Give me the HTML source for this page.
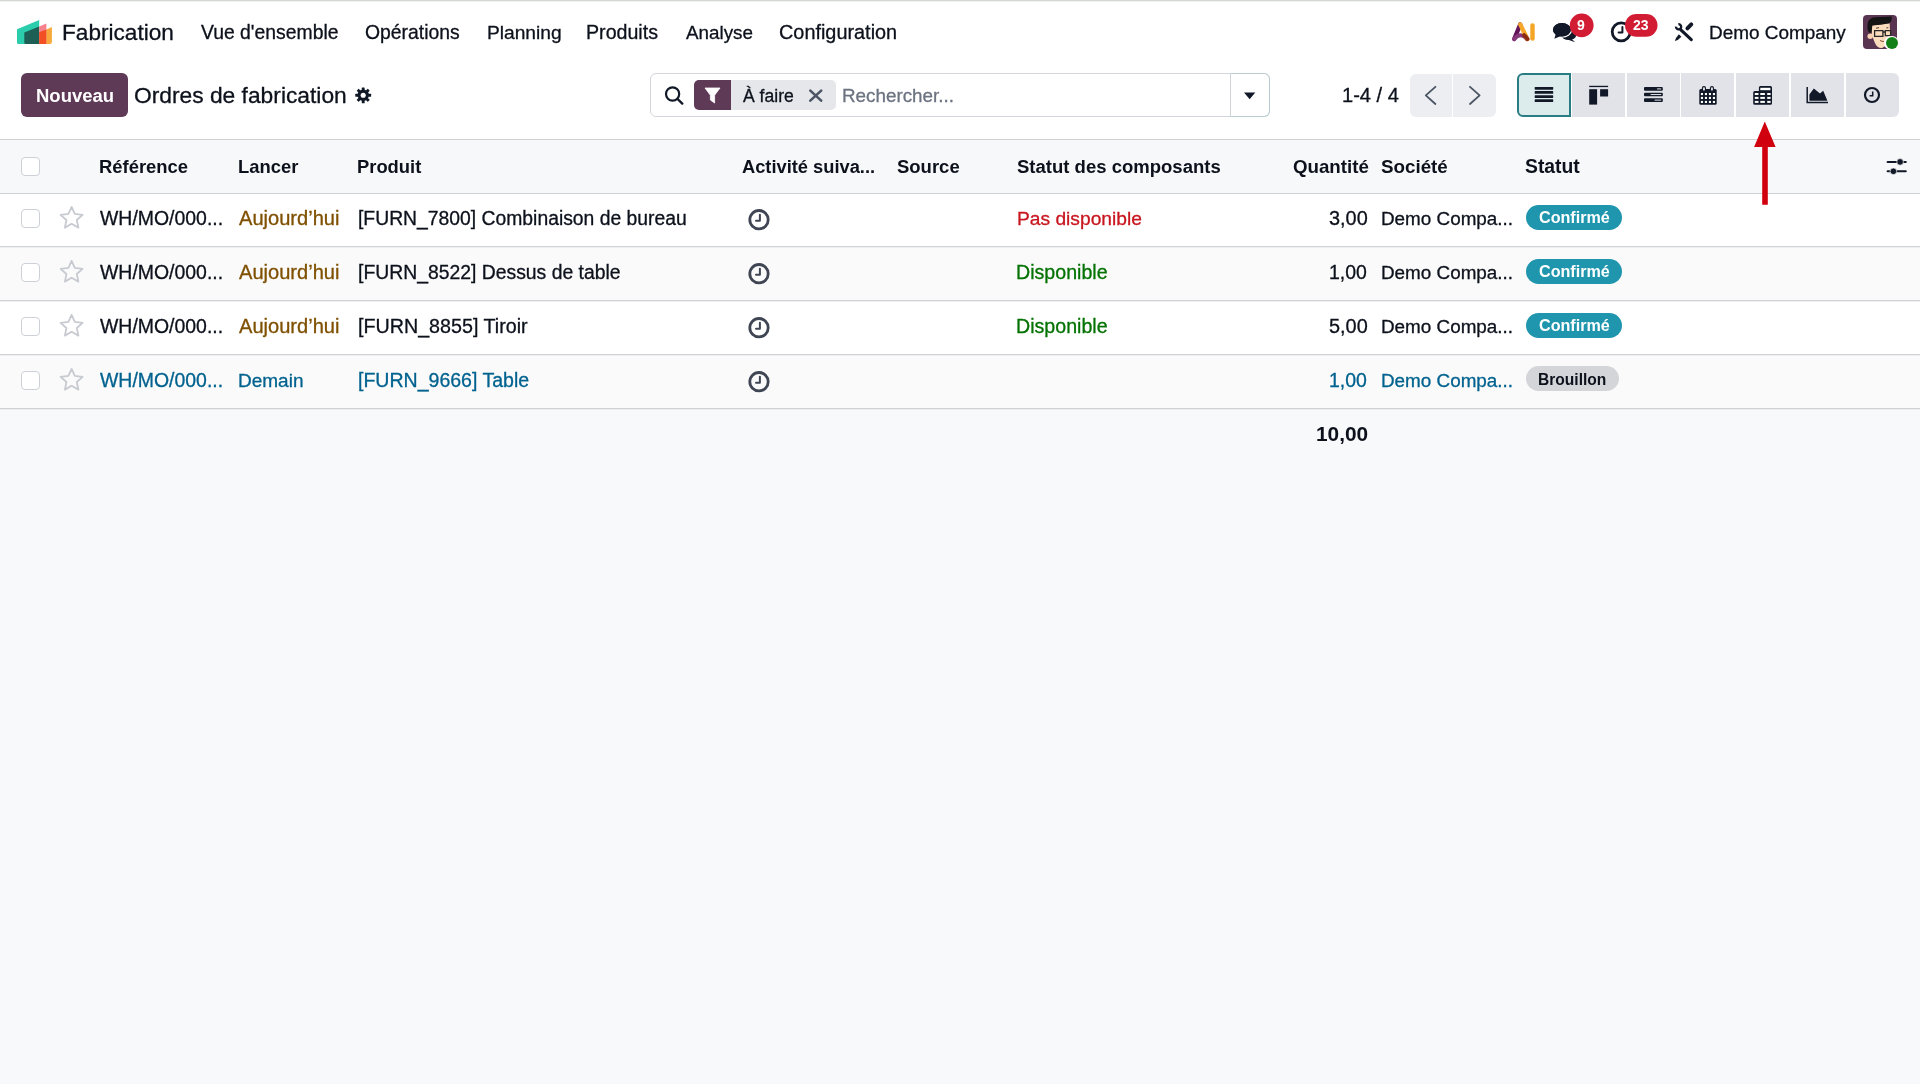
<!DOCTYPE html>
<html><head><meta charset="utf-8"><title>Ordres de fabrication</title>
<style>
html,body{margin:0;padding:0}
body{width:1920px;height:1084px;overflow:hidden;position:relative;background:#f8f9fa;font-family:"Liberation Sans",sans-serif}
.a{position:absolute;box-sizing:border-box}
.t{position:absolute;white-space:nowrap;font-family:"Liberation Sans",sans-serif;will-change:transform}
svg{position:absolute;overflow:visible}
</style></head><body>
<!-- white top area -->
<div class=a style="left:0;top:0;width:1920px;height:139px;background:#ffffff"></div>
<div class=a style="left:0;top:0;width:1920px;height:1px;background:#d3d8d5"></div>
<div class=a style="left:0;top:1px;width:1920px;height:1px;background:#f1f3f1"></div>

<!-- app logo -->
<svg style="left:0;top:0" width="60" height="60" viewBox="0 0 60 60">
<path d="M17 29.3 L39.2 20 L39.2 44 L18.5 44 Q17 44 17 42.5 Z" fill="#2bcdad"/>
<path d="M24.3 32.4 L39.2 26.5 L39.2 44 L25.8 44 Q24.3 44 24.3 42.5 Z" fill="#1d5f54"/>
<path d="M39.2 26.6 L46.4 23.6 L46.4 44 L39.2 44 Z" fill="#f7828e"/>
<path d="M46.4 29.4 L51.9 27 L51.9 42 Q51.9 44 49.9 44 L46.4 44 Z" fill="#f7a93b"/>
<path d="M39.2 32.3 L46.4 29.4 L46.4 44 L39.2 44 Z" fill="#f24f24"/>
</svg>

<!-- AI icon -->
<svg style="left:0;top:0" width="1" height="1">
<path d="M1520.2 24.6 L1514.2 39" stroke="#64155a" stroke-width="4.4" stroke-linecap="round" fill="none"/>
<path d="M1514.2 39 Q1520.5 31.5 1527.2 39" stroke="#86397a" stroke-width="4.2" stroke-linecap="round" fill="none"/>
<path d="M1520.4 24.6 L1527.3 39" stroke="#f6a82b" stroke-width="4.4" stroke-linecap="round" fill="none"/>
<path d="M1524.2 35.2 Q1526.2 36.8 1527.3 39" stroke="#8c2c12" stroke-width="4" stroke-linecap="round" fill="none"/>
<path d="M1532.5 25.4 L1532.5 38.6" stroke="#f5a525" stroke-width="4.4" stroke-linecap="round" fill="none"/>
</svg>

<!-- chat icon -->
<svg style="left:0;top:0" width="1" height="1">
<ellipse cx="1568.8" cy="34.6" rx="7.6" ry="5.4" fill="#111827"/>
<path d="M1571 38.5 L1575.2 42.3 L1567.5 39.6 Z" fill="#111827"/>
<ellipse cx="1561.9" cy="29.8" rx="9.6" ry="7.4" fill="#111827" stroke="#ffffff" stroke-width="1.3"/>
<ellipse cx="1561.9" cy="29.8" rx="9" ry="6.8" fill="#111827"/>
<path d="M1555.8 34.2 L1554.3 38.7 L1561 36" fill="#111827"/>
<circle cx="1581.7" cy="25.35" r="11.9" fill="#d21c34"/>
</svg>
<!-- clock icon nav -->
<svg style="left:0;top:0" width="1" height="1">
<circle cx="1621.2" cy="31.8" r="9" stroke="#111827" stroke-width="2.8" fill="none"/>
<path d="M1622.4 27 L1622.4 32.6 L1618.6 32.6" stroke="#111827" stroke-width="2" fill="none" stroke-linecap="round" stroke-linejoin="round"/>
<rect x="1625" y="14" width="32.5" height="22.7" rx="11.35" fill="#d21c34"/>
</svg>
<!-- tools icon -->
<svg style="left:0;top:0" width="1" height="1">
<path d="M1680.6 29.6 L1691.3 39.6" stroke="#111827" stroke-width="3.1" stroke-linecap="round"/>
<path d="M1678.37 24.2 A2.6 2.6 0 1 1 1676.0 26.57" stroke="#111827" stroke-width="2.3" fill="none"/>
<path d="M1691.3 24.3 L1687.4 28.4" stroke="#111827" stroke-width="3.9" stroke-linecap="round"/>
<path d="M1678.9 34.3 L1681.4 36.7 L1677.8 40 L1674.8 40.9 L1676 38 Z" fill="#111827"/>
</svg>
<!-- avatar -->
<div class=a style="left:1863px;top:14.8px;width:34px;height:34px;border-radius:4px;background:#5a3552;overflow:hidden">
<svg style="left:0;top:0" width="34" height="34" viewBox="0 0 34 34">
<circle cx="7.2" cy="21.2" r="2.7" fill="#f8d2b0"/>
<path d="M8.5 10.4 L26.6 8.2 L27.4 21 Q26 30 19 33 Q14 33.5 11.5 27 Q9.2 22 8.5 17 Z" fill="#fbdcbc"/>
<path d="M4.5 9.3 Q5 5.5 6.7 4.5 Q9 2.3 11.9 2.3 L28.8 1.5 L28.5 5.6 Q27.6 7.5 26.2 8.2 L19.2 9.6 L9.3 10.4 L8.6 17.8 L6.3 17.8 Q4.5 15 4.5 13.7 Z" fill="#151515"/>
<path d="M11.6 15.7 H19.9 V21.3 H11.6 Z M22.3 15.7 H27.6 V20.7 H22.3 Z M19.9 17 H22.3" stroke="#262626" stroke-width="1.3" fill="none"/>
<path d="M13 13.3 L16 12.6 M23.4 12.8 L25.3 12.8" stroke="#3a2a20" stroke-width="0.9"/>
<path d="M17 25.4 Q19 26.8 21 26.4" stroke="#7a3d2a" stroke-width="0.9" fill="none"/>
</svg>
</div>
<div class=a style="left:1884.25px;top:35.5px;width:14.6px;height:14.6px;border-radius:50%;background:#fff"></div>
<div class=a style="left:1885.55px;top:36.8px;width:12px;height:12px;border-radius:50%;background:#137f17"></div>
<div class=t style="left:1576.6px;top:18px;font-size:14px;line-height:14px;font-weight:700;color:#fff">9</div>
<div class=t style="left:1632.6px;top:18px;font-size:14px;line-height:14px;font-weight:700;color:#fff">23</div>

<!-- Nouveau button -->
<div class=a style="left:21px;top:73px;width:107px;height:44px;border-radius:6px;background:#5f3a57"></div>
<!-- gear -->
<svg style="left:0;top:0" width="1" height="1">
<g transform="translate(363.2 95.3)" fill="#111827">
<circle r="5.7"/><rect x="-1.45" y="-7.9" width="2.9" height="4" rx="0.5" transform="rotate(0)"/><rect x="-1.45" y="-7.9" width="2.9" height="4" rx="0.5" transform="rotate(45)"/><rect x="-1.45" y="-7.9" width="2.9" height="4" rx="0.5" transform="rotate(90)"/><rect x="-1.45" y="-7.9" width="2.9" height="4" rx="0.5" transform="rotate(135)"/><rect x="-1.45" y="-7.9" width="2.9" height="4" rx="0.5" transform="rotate(180)"/><rect x="-1.45" y="-7.9" width="2.9" height="4" rx="0.5" transform="rotate(225)"/><rect x="-1.45" y="-7.9" width="2.9" height="4" rx="0.5" transform="rotate(270)"/><rect x="-1.45" y="-7.9" width="2.9" height="4" rx="0.5" transform="rotate(315)"/>
<circle r="2.55" fill="#fff"/>
</g>
</svg>
<!-- search box -->
<div class=a style="left:650px;top:73.3px;width:620px;height:43.7px;border:1.4px solid #d3d6da;border-radius:6px;background:#fff"></div>
<div class=a style="left:1230px;top:73.3px;width:40px;height:43.7px;border:1.4px solid #b9ccd0;border-left:1.4px solid #d0d3d8;border-radius:0 6px 6px 0;background:#fff"></div>
<svg style="left:0;top:0" width="1" height="1">
<circle cx="672.6" cy="94" r="6.6" stroke="#111827" stroke-width="2.2" fill="none"/>
<path d="M677.6 99 L682.3 103.6" stroke="#111827" stroke-width="2.4" stroke-linecap="round"/>
</svg>
<div class=a style="left:694px;top:80px;width:142px;height:30px;border-radius:5px;background:#e5e7eb"></div>
<div class=a style="left:694px;top:80px;width:37px;height:30px;border-radius:5px 0 0 5px;background:#5f3a57"></div>
<svg style="left:0;top:0" width="1" height="1">
<path d="M705 88 L720 88 L714.6 95.2 L714.6 103 L710.4 100 L710.4 95.2 Z" fill="#fff" stroke="#fff" stroke-width="0.8" stroke-linejoin="round"/>
<path d="M810.3 90.6 L821.2 100.6 M821.2 90.6 L810.3 100.6" stroke="#4b5563" stroke-width="2.6" stroke-linecap="round"/>
<path d="M1244 92.5 L1255.3 92.5 L1249.65 99.2 Z" fill="#111827"/>
</svg>

<!-- pager -->
<div class=a style="left:1409.5px;top:73.5px;width:86.5px;height:43.5px;border-radius:6px;background:#eceef2"></div>
<div class=a style="left:1451.8px;top:73.5px;width:1.6px;height:43.5px;background:#ffffff"></div>
<svg style="left:0;top:0" width="1" height="1">
<path d="M1435.4 86.8 L1425.8 95.4 L1435.4 104" stroke="#4b5563" stroke-width="1.8" fill="none" stroke-linecap="round" stroke-linejoin="round"/>
<path d="M1470 86.8 L1479.6 95.4 L1470 104" stroke="#4b5563" stroke-width="1.8" fill="none" stroke-linecap="round" stroke-linejoin="round"/>
</svg>

<!-- view switcher -->
<div class=a style="left:1517.3px;top:73.2px;width:53.3px;height:43.8px;border:2px solid #287c82;border-radius:6px 0 0 6px;background:#dcecec"></div>
<div class=a style="left:1572.3px;top:73.2px;width:52.8px;height:43.8px;background:#e1e3e8"></div>
<div class=a style="left:1626.9px;top:73.2px;width:52.9px;height:43.8px;background:#e1e3e8"></div>
<div class=a style="left:1681.4px;top:73.2px;width:53.1px;height:43.8px;background:#e1e3e8"></div>
<div class=a style="left:1736.1px;top:73.2px;width:52.7px;height:43.8px;background:#e1e3e8"></div>
<div class=a style="left:1791px;top:73.2px;width:52.8px;height:43.8px;background:#e1e3e8"></div>
<div class=a style="left:1845.5px;top:73.2px;width:53px;height:43.8px;border-radius:0 6px 6px 0;background:#e1e3e8"></div>
<svg style="left:0;top:0" width="1" height="1">
<!-- list -->
<g fill="#111827">
<rect x="1534.7" y="87" width="18.5" height="2.7" rx="0.6"/>
<rect x="1534.7" y="91.1" width="18.5" height="2.7" rx="0.6"/>
<rect x="1534.7" y="95.2" width="18.5" height="2.7" rx="0.6"/>
<rect x="1534.7" y="99.3" width="18.5" height="2.7" rx="0.6"/>
<!-- kanban -->
<rect x="1589.2" y="85.8" width="18.9" height="1.3"/>
<rect x="1589.2" y="89.2" width="7.9" height="15.4"/>
<rect x="1600.1" y="89.2" width="8" height="7.3"/>
<!-- activity -->
<rect x="1644" y="87.1" width="18.8" height="3.6" rx="1"/>
<rect x="1644" y="92.8" width="18.8" height="3.5" rx="1"/>
<rect x="1644" y="98.3" width="18.8" height="3.7" rx="1"/>
</g>
<g stroke="#e1e3e8" stroke-width="1" stroke-linecap="round">
<path d="M1657.4 88.9 H1660.8 M1651 94.55 H1660.8 M1655 100.15 H1660.8"/>
</g>
<!-- calendar -->
<g fill="#111827">
<rect x="1699.3" y="88.9" width="17.4" height="15.85" rx="1.5"/>
<rect x="1701.9" y="86" width="4.1" height="5" rx="2"/>
<rect x="1709.9" y="86" width="4.1" height="5" rx="2"/>
</g>
<g fill="#e1e3e8">
<rect x="1703" y="87.3" width="1.9" height="3.3" rx="0.9"/>
<rect x="1711" y="87.3" width="1.9" height="3.3" rx="0.9"/>
</g>
<g fill="#ffffff">
<rect x="1700.9" y="93" width="2.1" height="2.1"/><rect x="1704.9" y="93" width="2.1" height="2.1"/><rect x="1708.9" y="93" width="2.1" height="2.1"/><rect x="1712.9" y="93" width="2.1" height="2.1"/>
<rect x="1700.9" y="96.9" width="2.1" height="2.1"/><rect x="1704.9" y="96.9" width="2.1" height="2.1"/><rect x="1708.9" y="96.9" width="2.1" height="2.1"/><rect x="1712.9" y="96.9" width="2.1" height="2.1"/>
<rect x="1700.9" y="100.9" width="2.1" height="2.1"/><rect x="1704.9" y="100.9" width="2.1" height="2.1"/><rect x="1708.9" y="100.9" width="2.1" height="2.1"/><rect x="1712.9" y="100.9" width="2.1" height="2.1"/>
</g>
<!-- pivot -->
<path d="M1758.9 87.5 Q1758.9 86 1760.4 86 L1770.5 86 Q1772 86 1772 87.5 L1772 103.25 Q1772 104.75 1770.5 104.75 L1754.7 104.75 Q1753.2 104.75 1753.2 103.25 L1753.2 92.5 Q1753.2 91 1754.7 91 L1758.9 91 Z" fill="#111827"/>
<g fill="#ffffff">
<rect x="1760.3" y="87.8" width="10.1" height="2.4"/>
<rect x="1754.8" y="93" width="3.7" height="2"/><rect x="1760.3" y="93" width="4.6" height="2"/><rect x="1767.2" y="93" width="3.4" height="2"/>
<rect x="1754.8" y="96.9" width="3.7" height="2"/><rect x="1760.3" y="96.9" width="4.6" height="2"/><rect x="1767.2" y="96.9" width="3.4" height="2"/>
<rect x="1754.8" y="100.9" width="3.7" height="2"/><rect x="1760.3" y="100.9" width="4.6" height="2"/><rect x="1767.2" y="100.9" width="3.4" height="2"/>
</g>
<!-- graph -->
<path d="M1807.2 86.9 V102.6 H1828" stroke="#111827" stroke-width="1.5" fill="none"/>
<path d="M1809.4 100.8 L1809.4 94.5 L1813.8 88.6 L1820 93.5 L1823.2 90.8 L1827.4 100.8 Z" fill="#111827"/>
<!-- clock -->
<circle cx="1872" cy="95" r="7" stroke="#111827" stroke-width="2.2" fill="none"/>
<path d="M1872.7 91.5 V95.7 H1869.6" stroke="#111827" stroke-width="1.5" fill="none"/>
</svg>



<!-- table header -->
<div class=a style="left:0;top:139px;width:1920px;height:1px;background:#cfd1d5"></div>
<div class=a style="left:0;top:140px;width:1920px;height:53px;background:#f7f8fa"></div>
<div class=a style="left:0;top:193px;width:1920px;height:1px;background:#cfd1d5"></div>
<!-- rows -->
<div class=a style="left:0;top:194px;width:1920px;height:52px;background:#ffffff"></div>
<div class=a style="left:0;top:246px;width:1920px;height:1px;background:#cfd1d5"></div>
<div class=a style="left:0;top:247px;width:1920px;height:53px;background:#fafafa"></div>
<div class=a style="left:0;top:300px;width:1920px;height:1px;background:#cfd1d5"></div>
<div class=a style="left:0;top:301px;width:1920px;height:53px;background:#ffffff"></div>
<div class=a style="left:0;top:354px;width:1920px;height:1px;background:#cfd1d5"></div>
<div class=a style="left:0;top:355px;width:1920px;height:53px;background:#fafafa"></div>
<div class=a style="left:0;top:408px;width:1920px;height:1px;background:#cfd1d5"></div>
<div class=a style="left:0;top:247px;width:1920px;height:1px;background:#eeeff1"></div>
<div class=a style="left:0;top:301px;width:1920px;height:1px;background:#f0f1f2"></div>
<div class=a style="left:0;top:355px;width:1920px;height:1px;background:#eeeff1"></div>
<div class=a style="left:0;top:409px;width:1920px;height:1px;background:#eceef0"></div>
<!-- checkboxes -->
<div class=a style="left:21.4px;top:157px;width:18.6px;height:18.6px;border:1.7px solid #cdd0d6;border-radius:4px;background:#ffffff"></div>
<div class=a style="left:21.4px;top:209.2px;width:18.6px;height:18.6px;border:1.7px solid #cdd0d6;border-radius:4px;background:#ffffff"></div>
<div class=a style="left:21.4px;top:263.2px;width:18.6px;height:18.6px;border:1.7px solid #cdd0d6;border-radius:4px;background:#ffffff"></div>
<div class=a style="left:21.4px;top:317.2px;width:18.6px;height:18.6px;border:1.7px solid #cdd0d6;border-radius:4px;background:#ffffff"></div>
<div class=a style="left:21.4px;top:371.2px;width:18.6px;height:18.6px;border:1.7px solid #cdd0d6;border-radius:4px;background:#ffffff"></div>

<!-- stars & activity clocks -->
<svg style="left:0;top:0" width="1" height="1">
<defs>
<path id="star" d="M71.6 206.9 L74.8 213.9 L82.6 214.8 L76.8 220 L78.4 227.6 L71.6 223.8 L64.9 227.6 L66.4 220 L60.6 214.8 L68.4 213.9 Z" fill="none" stroke="#c7cbd1" stroke-width="1.8" stroke-linejoin="round"/>
<g id="aclk">
<circle cx="759" cy="219.7" r="9.2" stroke="#3f4553" stroke-width="2.8" fill="none"/>
<path d="M759.9 214.8 V220.8 H756" stroke="#3f4553" stroke-width="2" fill="none" stroke-linecap="round" stroke-linejoin="round"/>
</g>
</defs>
<use href="#star"/><use href="#star" y="54"/><use href="#star" y="108"/><use href="#star" y="162"/>
<use href="#aclk"/><use href="#aclk" y="54"/><use href="#aclk" y="108"/><use href="#aclk" y="162"/>
</svg>
<!-- sliders -->
<svg style="left:0;top:0" width="1" height="1">
<path d="M1887.6 161.9 H1905.8 M1887.6 171.3 H1905.8" stroke="#111827" stroke-width="2" stroke-linecap="round"/>
<circle cx="1900.1" cy="161.9" r="3.3" fill="#111827" stroke="#f7f8fa" stroke-width="0.7"/>
<circle cx="1893.4" cy="171.3" r="3.3" fill="#111827" stroke="#f7f8fa" stroke-width="0.7"/>
</svg>

<!-- badges -->
<div class=a style="left:1526px;top:204.8px;width:96px;height:25px;border-radius:12.5px;background:#1f96ad"></div>
<div class=a style="left:1526px;top:258.8px;width:96px;height:25px;border-radius:12.5px;background:#1f96ad"></div>
<div class=a style="left:1526px;top:312.8px;width:96px;height:25px;border-radius:12.5px;background:#1f96ad"></div>
<div class=a style="left:1526px;top:366px;width:93px;height:25px;border-radius:12.5px;background:#d3d5d9"></div>

<div class=t style="left:62.00px;top:22px;font-size:22.62px;line-height:22.62px;font-weight:400;color:#0c111b;-webkit-text-stroke:0.3px #0c111b">Fabrication</div>
<div class=t style="left:201.40px;top:23px;font-size:19.38px;line-height:19.38px;font-weight:400;color:#0c111b;-webkit-text-stroke:0.3px #0c111b">Vue d&#x27;ensemble</div>
<div class=t style="left:365.00px;top:23px;font-size:19.35px;line-height:19.35px;font-weight:400;color:#0c111b;-webkit-text-stroke:0.3px #0c111b">Opérations</div>
<div class=t style="left:486.80px;top:23px;font-size:19.18px;line-height:19.18px;font-weight:400;color:#0c111b;-webkit-text-stroke:0.3px #0c111b">Planning</div>
<div class=t style="left:586.30px;top:23px;font-size:19.64px;line-height:19.64px;font-weight:400;color:#0c111b;-webkit-text-stroke:0.3px #0c111b">Produits</div>
<div class=t style="left:686.30px;top:24px;font-size:18.83px;line-height:18.83px;font-weight:400;color:#0c111b;-webkit-text-stroke:0.3px #0c111b">Analyse</div>
<div class=t style="left:779.30px;top:23px;font-size:19.86px;line-height:19.86px;font-weight:400;color:#0c111b;-webkit-text-stroke:0.3px #0c111b">Configuration</div>
<div class=t style="left:1709.30px;top:24px;font-size:18.96px;line-height:18.96px;font-weight:400;color:#0c111b;-webkit-text-stroke:0.3px #0c111b">Demo Company</div>
<div class=t style="left:36.10px;top:87px;font-size:18.49px;line-height:18.49px;font-weight:700;color:#ffffff">Nouveau</div>
<div class=t style="left:133.60px;top:84px;font-size:22.79px;line-height:22.79px;font-weight:400;color:#0c111b;-webkit-text-stroke:0.3px #0c111b">Ordres de fabrication</div>
<div class=t style="left:743.00px;top:88px;font-size:17.6px;line-height:17.6px;font-weight:400;color:#0c111b;-webkit-text-stroke:0.3px #0c111b">À faire</div>
<div class=t style="left:842.30px;top:87px;font-size:18.84px;line-height:18.84px;font-weight:400;color:#6b7280;-webkit-text-stroke:0.3px #6b7280">Rechercher...</div>
<div class=t style="left:1342.00px;top:85px;font-size:20.1px;line-height:20.1px;font-weight:400;color:#0c111b;-webkit-text-stroke:0.3px #0c111b">1-4 / 4</div>
<div class=t style="left:98.75px;top:158px;font-size:18.43px;line-height:18.43px;font-weight:700;color:#0c111b">Référence</div>
<div class=t style="left:238.00px;top:158px;font-size:18.43px;line-height:18.43px;font-weight:700;color:#0c111b">Lancer</div>
<div class=t style="left:357.10px;top:158px;font-size:18.37px;line-height:18.37px;font-weight:700;color:#0c111b">Produit</div>
<div class=t style="left:741.75px;top:158px;font-size:18.3px;line-height:18.3px;font-weight:700;color:#0c111b">Activité suiva...</div>
<div class=t style="left:896.80px;top:158px;font-size:18.49px;line-height:18.49px;font-weight:700;color:#0c111b">Source</div>
<div class=t style="left:1017.00px;top:158px;font-size:18.52px;line-height:18.52px;font-weight:700;color:#0c111b">Statut des composants</div>
<div class=t style="left:1292.50px;top:158px;font-size:18.72px;line-height:18.72px;font-weight:700;color:#0c111b">Quantité</div>
<div class=t style="left:1380.60px;top:158px;font-size:18.77px;line-height:18.77px;font-weight:700;color:#0c111b">Société</div>
<div class=t style="left:1525.00px;top:157px;font-size:19.34px;line-height:19.34px;font-weight:700;color:#0c111b">Statut</div>
<div class=t style="left:100.30px;top:209px;font-size:19.46px;line-height:19.46px;font-weight:400;color:#0c111b;-webkit-text-stroke:0.3px #0c111b">WH/MO/000...</div>
<div class=t style="left:239.00px;top:208px;font-size:20.09px;line-height:20.09px;font-weight:400;color:#7f5000;-webkit-text-stroke:0.3px #7f5000">Aujourd’hui</div>
<div class=t style="left:358.20px;top:209px;font-size:19.34px;line-height:19.34px;font-weight:400;color:#0c111b;-webkit-text-stroke:0.3px #0c111b">[FURN_7800] Combinaison de bureau</div>
<div class=t style="left:1017.00px;top:209px;font-size:19.22px;line-height:19.22px;font-weight:400;color:#c8161f;-webkit-text-stroke:0.3px #c8161f">Pas disponible</div>
<div class=t style="left:1328.50px;top:209px;font-size:19.9px;line-height:19.9px;font-weight:400;color:#0c111b;-webkit-text-stroke:0.3px #0c111b">3,00</div>
<div class=t style="left:1381.10px;top:210px;font-size:18.88px;line-height:18.88px;font-weight:400;color:#0c111b;-webkit-text-stroke:0.3px #0c111b">Demo Compa...</div>
<div class=t style="left:1538.50px;top:209px;font-size:16.15px;line-height:16.15px;font-weight:700;color:#ffffff">Confirmé</div>
<div class=t style="left:100.30px;top:263px;font-size:19.46px;line-height:19.46px;font-weight:400;color:#0c111b;-webkit-text-stroke:0.3px #0c111b">WH/MO/000...</div>
<div class=t style="left:239.00px;top:262px;font-size:20.09px;line-height:20.09px;font-weight:400;color:#7f5000;-webkit-text-stroke:0.3px #7f5000">Aujourd’hui</div>
<div class=t style="left:358.20px;top:263px;font-size:19.38px;line-height:19.38px;font-weight:400;color:#0c111b;-webkit-text-stroke:0.3px #0c111b">[FURN_8522] Dessus de table</div>
<div class=t style="left:1016.00px;top:263px;font-size:19.61px;line-height:19.61px;font-weight:400;color:#037203;-webkit-text-stroke:0.3px #037203">Disponible</div>
<div class=t style="left:1329.30px;top:263px;font-size:19.48px;line-height:19.48px;font-weight:400;color:#0c111b;-webkit-text-stroke:0.3px #0c111b">1,00</div>
<div class=t style="left:1381.10px;top:264px;font-size:18.88px;line-height:18.88px;font-weight:400;color:#0c111b;-webkit-text-stroke:0.3px #0c111b">Demo Compa...</div>
<div class=t style="left:1538.50px;top:263px;font-size:16.15px;line-height:16.15px;font-weight:700;color:#ffffff">Confirmé</div>
<div class=t style="left:100.30px;top:317px;font-size:19.46px;line-height:19.46px;font-weight:400;color:#0c111b;-webkit-text-stroke:0.3px #0c111b">WH/MO/000...</div>
<div class=t style="left:239.00px;top:316px;font-size:20.09px;line-height:20.09px;font-weight:400;color:#7f5000;-webkit-text-stroke:0.3px #7f5000">Aujourd’hui</div>
<div class=t style="left:358.20px;top:317px;font-size:19.69px;line-height:19.69px;font-weight:400;color:#0c111b;-webkit-text-stroke:0.3px #0c111b">[FURN_8855] Tiroir</div>
<div class=t style="left:1016.00px;top:317px;font-size:19.61px;line-height:19.61px;font-weight:400;color:#037203;-webkit-text-stroke:0.3px #037203">Disponible</div>
<div class=t style="left:1328.50px;top:317px;font-size:19.9px;line-height:19.9px;font-weight:400;color:#0c111b;-webkit-text-stroke:0.3px #0c111b">5,00</div>
<div class=t style="left:1381.10px;top:318px;font-size:18.88px;line-height:18.88px;font-weight:400;color:#0c111b;-webkit-text-stroke:0.3px #0c111b">Demo Compa...</div>
<div class=t style="left:1538.50px;top:317px;font-size:16.15px;line-height:16.15px;font-weight:700;color:#ffffff">Confirmé</div>
<div class=t style="left:100.30px;top:371px;font-size:19.46px;line-height:19.46px;font-weight:400;color:#01628f;-webkit-text-stroke:0.3px #01628f">WH/MO/000...</div>
<div class=t style="left:238.00px;top:371px;font-size:19.0px;line-height:19.0px;font-weight:400;color:#01628f;-webkit-text-stroke:0.3px #01628f">Demain</div>
<div class=t style="left:358.20px;top:371px;font-size:19.55px;line-height:19.55px;font-weight:400;color:#01628f;-webkit-text-stroke:0.3px #01628f">[FURN_9666] Table</div>
<div class=t style="left:1329.30px;top:371px;font-size:19.48px;line-height:19.48px;font-weight:400;color:#01628f;-webkit-text-stroke:0.3px #01628f">1,00</div>
<div class=t style="left:1381.10px;top:372px;font-size:18.88px;line-height:18.88px;font-weight:400;color:#01628f;-webkit-text-stroke:0.3px #01628f">Demo Compa...</div>
<div class=t style="left:1538.40px;top:372px;font-size:15.57px;line-height:15.57px;font-weight:700;color:#0c111b">Brouillon</div>
<div class=t style="left:1316.20px;top:424px;font-size:20.83px;line-height:20.83px;font-weight:700;color:#0c111b">10,00</div>
<!-- red arrow -->
<svg style="left:0;top:0" width="1" height="1">
<path d="M1764.8 121.5 L1775.6 147.1 L1767.8 147.1 L1767.8 204.8 L1762.2 204.8 L1762.2 147.1 L1754.1 147.1 Z" fill="#d0000f"/>
</svg>
</body></html>
